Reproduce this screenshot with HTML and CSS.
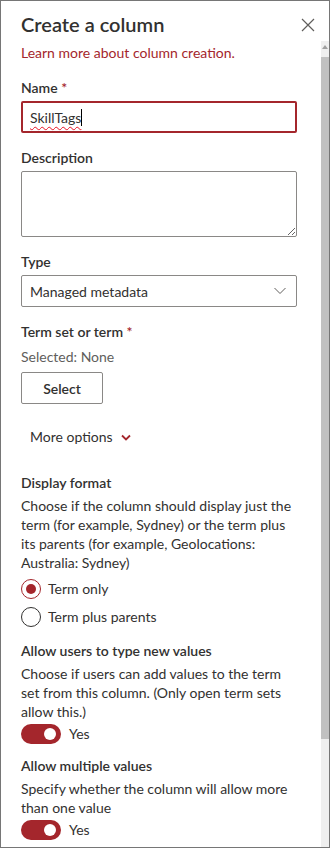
FILE: index.html
```html
<!DOCTYPE html>
<html lang="en">
  <head>
    <meta charset="UTF-8" />
    <meta name="viewport" content="width=device-width, initial-scale=1.0" />
    <title>Create a column</title>
    <link rel="stylesheet" href="styles.css">
  </head>
  <body>
    <div class="panel">
      <div class="header">
        <h1 class="title">Create a column</h1>
        <button class="close" aria-label="Close">
          <svg width="14" height="14" viewBox="0 0 14 14">
            <path d="M1 1L13 13M13 1L1 13" stroke="#605e5c" stroke-width="1.2" fill="none" />
          </svg>
        </button>
      </div>
      <div class="main">
        <div class="content">
          <a class="learn" href="#">Learn more about column creation.</a>

          <div class="label name-label">Name <span class="req">*</span></div>
          <div class="textbox focused"><span class="typed">SkillTags</span><span class="caret"></span></div>

          <div class="label gap">Description</div>
          <textarea class="textarea"></textarea>

          <div class="label gap">Type</div>
          <div class="dropdown">
            <span>Managed metadata</span>
            <svg width="12" height="8" viewBox="0 0 12 8">
              <path d="M0.5 1L6 6.5L11.5 1" stroke="#605e5c" stroke-width="1" fill="none" />
            </svg>
          </div>

          <div class="label gap">Term set or term <span class="req">*</span></div>
          <div class="selected">Selected: None</div>
          <button class="select-btn">Select</button>

          <div class="more">
            More options
            <svg width="10" height="7" viewBox="0 0 10 7">
              <path d="M1 1.5L5 5.5L9 1.5" stroke="#a4262c" stroke-width="1.8" fill="none" />
            </svg>
          </div>

          <div class="label section">Display format</div>
          <p class="desc">Choose if the column should display just the term (for example, Sydney) or the term plus its parents (for example, Geolocations: Australia: Sydney)</p>
          <div class="radios">
            <label class="radio checked"><span class="dot"></span>Term only</label>
            <label class="radio"><span class="dot"></span>Term plus parents</label>
          </div>

          <div class="label section2">Allow users to type new values</div>
          <p class="desc">Choose if users can add values to the term set from this column. (Only open term sets allow this.)</p>
          <div class="toggle-row"><span class="toggle"><span class="knob"></span></span>Yes</div>

          <div class="label section3">Allow multiple values</div>
          <p class="desc">Specify whether the column will allow more than one value</p>
          <div class="toggle-row"><span class="toggle"><span class="knob"></span></span>Yes</div>
        </div>
        <div class="scrollbar">
          <div class="arrow"></div>
          <div class="thumb"></div>
        </div>
      </div>
    </div>
  </body>
</html>
```

FILE: styles.css
```css
body {
  margin: 0;
  padding: 0;
  font-family: "Segoe UI", Lato, Arial, sans-serif;
  font-size: 14px;
  color: #323130;
  background-color: #ffffff;
}
.panel {
  width: 330px;
  height: 848px;
  box-sizing: border-box;
  border: 1px solid #767676;
  display: flex;
  flex-direction: column;
  background-color: #ffffff;
  overflow: hidden;
}
.header {
  height: 40px;
  display: flex;
  justify-content: space-between;
  align-items: flex-start;
  padding: 0 14px 0 20px;
}
.title {
  margin: 9px 0 0 0;
  font-size: 20px;
  font-weight: 600;
  line-height: 28px;
  color: #323130;
}
.close {
  margin-top: 17px;
  padding: 0;
  border: none;
  background: none;
  width: 14px;
  height: 14px;
  cursor: pointer;
}
.main {
  flex: 1;
  display: flex;
  min-height: 0;
}
.content {
  flex: 1;
  padding: 2px 24px 0 20px;
}
.learn {
  display: block;
  color: #a4262c;
  text-decoration: none;
  line-height: 20px;
}
.label {
  font-weight: 600;
  line-height: 20px;
  margin-bottom: 3px;
}
.name-label {
  margin-top: 15px;
}
.gap {
  margin-top: 15px;
}
.req {
  color: #a4262c;
}
.textbox {
  height: 32px;
  box-sizing: border-box;
  border: 1px solid #8a8886;
  border-radius: 2px;
  padding: 0 8px;
  display: flex;
  align-items: center;
}
.focused {
  border: 2px solid #a4262c;
  padding: 0 7px;
}
.typed {
  text-decoration: underline wavy #e81123;
  text-decoration-thickness: 1px;
  text-underline-offset: 3px;
}
.caret {
  width: 1px;
  height: 17px;
  background-color: #000000;
}
.textarea {
  display: block;
  width: 100%;
  height: 66px;
  box-sizing: border-box;
  border: 1px solid #8a8886;
  border-radius: 2px;
  margin: 0;
  font-family: inherit;
}
.dropdown {
  height: 32px;
  box-sizing: border-box;
  border: 1px solid #8a8886;
  border-radius: 2px;
  padding: 0 10px 0 8px;
  display: flex;
  align-items: center;
  justify-content: space-between;
}
.selected {
  line-height: 20px;
  color: #605e5c;
  margin-top: 5px;
}
.select-btn {
  display: block;
  margin-top: 5px;
  width: 82px;
  height: 32px;
  border: 1px solid #8a8886;
  border-radius: 2px;
  background-color: #ffffff;
  font-family: inherit;
  font-size: 14px;
  font-weight: 600;
  color: #323130;
}
.more {
  margin-top: 23px;
  padding-left: 9px;
  line-height: 20px;
  display: flex;
  align-items: center;
  gap: 8px;
}
.section {
  margin-top: 26px;
}
.section2 {
  margin-top: 14px;
}
.section3 {
  margin-top: 12px;
}
.desc {
  margin: 0;
  line-height: 19px;
}
.radios {
  margin-top: 7px;
  display: flex;
  flex-direction: column;
  gap: 8px;
}
.radio {
  display: flex;
  align-items: center;
  gap: 7px;
  line-height: 20px;
}
.dot {
  width: 20px;
  height: 20px;
  box-sizing: border-box;
  border: 1px solid #323130;
  border-radius: 50%;
  display: flex;
  align-items: center;
  justify-content: center;
}
.checked .dot {
  border-color: #a4262c;
}
.checked .dot::after {
  content: "";
  width: 10px;
  height: 10px;
  border-radius: 50%;
  background-color: #a4262c;
}
.toggle-row {
  margin-top: 3px;
  display: flex;
  align-items: center;
  gap: 8px;
  line-height: 20px;
}
.toggle {
  width: 40px;
  height: 20px;
  border-radius: 10px;
  background-color: #a4262c;
  display: flex;
  align-items: center;
  justify-content: flex-end;
  padding-right: 5px;
  box-sizing: border-box;
}
.knob {
  width: 12px;
  height: 12px;
  border-radius: 50%;
  background-color: #ffffff;
}
.scrollbar {
  width: 8px;
  background-color: #efefef;
  display: flex;
  flex-direction: column;
}
.arrow {
  height: 16px;
  position: relative;
}
.arrow::after {
  content: "";
  position: absolute;
  left: 1px;
  top: 4px;
  border-left: 3px solid transparent;
  border-right: 3px solid transparent;
  border-bottom: 4px solid #a0a0a0;
}
.thumb {
  height: 682px;
  background-color: #c1c1c1;
}
```
